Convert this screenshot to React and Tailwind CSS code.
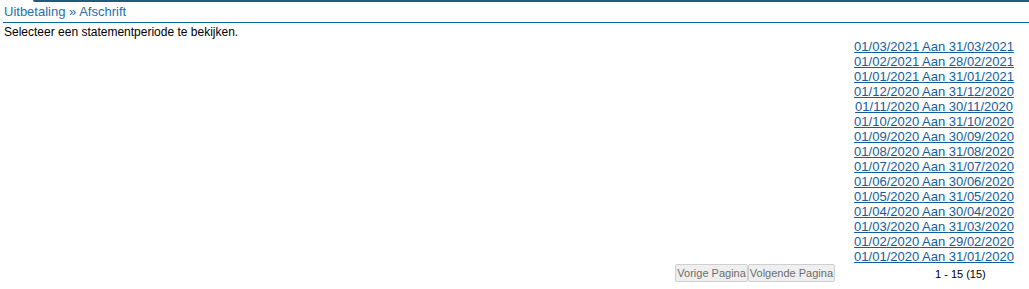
export default function App() {
  const periods = [
    ["01/03/2021", "31/03/2021"],
    ["01/02/2021", "28/02/2021"],
    ["01/01/2021", "31/01/2021"],
    ["01/12/2020", "31/12/2020"],
    ["01/11/2020", "30/11/2020"],
    ["01/10/2020", "31/10/2020"],
    ["01/09/2020", "30/09/2020"],
    ["01/08/2020", "31/08/2020"],
    ["01/07/2020", "31/07/2020"],
    ["01/06/2020", "30/06/2020"],
    ["01/05/2020", "31/05/2020"],
    ["01/04/2020", "30/04/2020"],
    ["01/03/2020", "31/03/2020"],
    ["01/02/2020", "29/02/2020"],
    ["01/01/2020", "31/01/2020"],
  ];
  return (
    <div className="w-[1029px] h-[289px] bg-white font-['Liberation_Sans',Arial,sans-serif] text-black">
      <div className="ml-[33px] h-[2px] bg-[#1b5e78] rounded-bl-[3px]" />
      <div className="ml-[3px] pl-[1px] pt-[2px] h-[21px] border-b border-[#0b69a0] text-[13px] leading-[15px] text-[#1f6fab]">
        Uitbetaling » Afschrift
      </div>
      <div className="pl-[4px] pt-[3px] text-[12px] leading-[13px]">
        Selecteer een statementperiode te bekijken.
      </div>
      <div className="flex justify-end pr-[5px]">
        <div className="w-[180px] flex flex-col items-center text-[13px] leading-[15px]">
          {periods.map(([a, b]) => (
            <a key={a} href="#" className="text-[#135d9c] underline decoration-[#135d9c]">
              {a} Aan {b}
            </a>
          ))}
        </div>
      </div>
      <div className="flex">
        <div className="flex-1 flex justify-end items-start">
          <button className="h-[18px] px-[1px] text-[11px] leading-[16px] text-[#6d6d6d] bg-[#efefef] border border-[#cfcfcf] rounded-[2px]">
            Vorige Pagina
          </button>
          <button className="h-[18px] px-[1px] text-[11px] leading-[16px] text-[#6d6d6d] bg-[#efefef] border border-[#cfcfcf] rounded-[2px]">
            Volgende Pagina
          </button>
        </div>
        <div className="w-[194px] pl-[100px] pt-[3px] text-[11px] leading-[15px]">
          1 - 15 (15)
        </div>
      </div>
    </div>
  );
}
